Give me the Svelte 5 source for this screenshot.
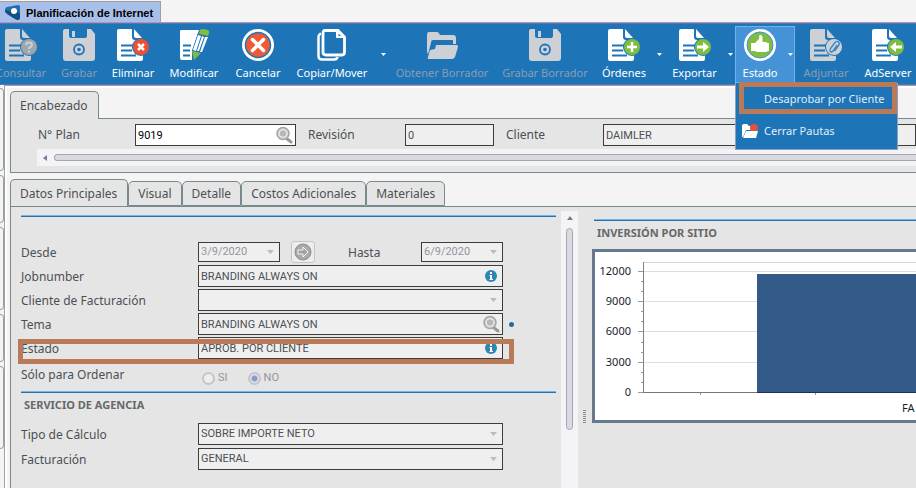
<script>
  let menuOpen = $state(true);
  let activeTab = $state('Datos Principales');
  let paraOrdenar = $state('NO');

  const tools = [
    { label: 'Consultar', icon: 'query', off: true },
    { label: 'Grabar', icon: 'save', off: true },
    { label: 'Eliminar', icon: 'delete' },
    { label: 'Modificar', icon: 'edit' },
    { label: 'Cancelar', icon: 'cancel' },
    { label: 'Copiar/Mover', icon: 'copy', drop: true },
    { label: 'Obtener Borrador', icon: 'folder', off: true },
    { label: 'Grabar Borrador', icon: 'save', off: true },
    { label: 'Órdenes', icon: 'add', drop: true },
    { label: 'Exportar', icon: 'export', drop: true },
    { label: 'Estado', icon: 'thumb', drop: true, menu: true },
    { label: 'Adjuntar', icon: 'attach', off: true },
    { label: 'AdServer', icon: 'import' }
  ];

  const tabs = ['Datos Principales', 'Visual', 'Detalle', 'Costos Adicionales', 'Materiales'];

  const docIcons = ['query', 'delete', 'add', 'export', 'attach', 'import'];

  // chart scale, y in pixels from the top of the plot
  const yAxis = [
    { value: 12000, y: 19 },
    { value: 9000, y: 49 },
    { value: 6000, y: 79 },
    { value: 3000, y: 110 },
    { value: 0, y: 140 }
  ];
  const minorTicks = [29, 39, 59, 69, 90, 100, 120, 130];
</script>

{#snippet toolIcon(name, off)}
  <svg class="tool-icon" width="32" height="32" viewBox="0 0 32 32" fill={off ? '#cdd0d4' : '#fff'} aria-hidden="true">
    {#if docIcons.includes(name)}
      <path d="M0 2Q0 0 2 0H15V8Q15 11 18 11H26V30Q26 32 24 32H2Q0 32 0 30Z" />
      <path d="M17 0L25 9H19Q17 9 17 7Z" />
      <path d="M4 16.500H16M4 21.500H15M4 26.500H19" stroke="#1d75b8" stroke-width="2" />
      <circle cx="24" cy="18" r="9" fill="#1d75b8" />
    {/if}
    {#if name === 'query'}
      <circle cx="24" cy="18" r="8" fill="#9fa6ae" />
      <path d="M21 16Q21 13.500 24 13.500T27 16Q27 17.500 24 19V20M24 21.500V23.500" fill="none" stroke="#cdd0d4" stroke-width="2" />
    {:else if name === 'delete'}
      <circle cx="24" cy="18" r="8" fill="#ee4f33" />
      <path d="M21 15L27 21M27 15L21 21" stroke="#fff" stroke-width="2.500" />
    {:else if name === 'add'}
      <circle cx="24" cy="18" r="8" fill="#7fbd41" />
      <path d="M24 13V23M19 18H29" stroke="#fff" stroke-width="2.500" />
    {:else if name === 'export'}
      <circle cx="24" cy="18" r="8" fill="#7fbd41" />
      <path d="M18 16.500H24V13L30 18L24 23V19.500H18Z" fill="#fff" />
    {:else if name === 'import'}
      <circle cx="24" cy="18" r="8" fill="#7fbd41" />
      <path d="M30 16.500H24V13L18 18L24 23V19.500H30Z" fill="#fff" />
    {:else if name === 'attach'}
      <circle cx="24" cy="18" r="8" fill="#cdd0d4" />
      <path d="M27 16L23 22Q21 24 20 22Q19.500 21 20.500 19.500L24.500 14Q26.500 11.500 28.500 13Q30 14.500 28.500 16.500L24.500 22" fill="none" stroke="#2f86c4" stroke-width="1.300" />
    {:else if name === 'save'}
      <path d="M2 0H6V7Q6 9 8 9H22Q24 9 24 7V0H28L32 5V29Q32 32 29 32H3Q0 32 0 29V2Q0 0 2 0Z" />
      <path d="M9 2H12V8H9Z" />
      <circle cx="16" cy="20.500" r="5" fill="none" stroke="#1d75b8" stroke-width="1.800" />
      <circle cx="16" cy="20.500" r="1.800" fill="#1d75b8" />
    {:else if name === 'edit'}
      <path d="M2 2Q2 1 4 1H21L14 22V31H4Q2 31 2 29Z" />
      <path d="M5 16.500H13M5 21.500H12M5 26.500H12" stroke="#1d75b8" stroke-width="2" />
      <path d="M20 4L31 7L25 25L16 32L14 22Z" fill="#1d75b8" />
      <path d="M22 1Q23 0 25 0L30 1Q32 2 31 4L30 7L21 5Z" fill="#7fbd41" />
      <path d="M20 6L23 7L18 22L15 21ZM24 7L26 8L21 22L19 22ZM27 8L30 8L24 23L22 23Z" fill="#fff" />
      <path d="M14 22L23 24L16 31Z" fill="#7fbd41" />
    {:else if name === 'cancel'}
      <circle cx="16" cy="16" r="16" />
      <circle cx="16" cy="16" r="12.500" fill="#ee5a36" stroke="#1d75b8" stroke-width="1.500" />
      <path d="M10.500 10.500L21.500 21.500M21.500 10.500L10.500 21.500" stroke="#fff" stroke-width="3.500" stroke-linecap="round" />
    {:else if name === 'copy'}
      <path d="M5 5H4Q2.500 6 2.500 8V27Q2.500 30.500 6 30.500H18Q21 30.500 21.500 28" fill="none" stroke="#fff" stroke-width="2.500" />
      <path d="M9 1.500H22L28.500 8V23Q28.500 26 26 26H10Q7 26 7 23V4Q7 1.500 9 1.500Z" fill="none" stroke="#fff" stroke-width="2.800" />
      <path d="M20 2V9H28L22 2Z" />
      <path d="M22.500 4.500V7H25Z" fill="#1d75b8" />
    {:else if name === 'folder'}
      <path d="M1 6Q1 3 3 3H11Q13 3 14 6H27Q30 6 30 9V15H27V11H7Q5 11 5 14L2 25Q1 25 1 22Z" />
      <path d="M10 16H31Q32 16 32 18L29 28Q28 30 26 30H3Q1 30 2 28L4 21L9 20Z" />
    {:else if name === 'thumb'}
      <circle cx="16" cy="16" r="16" />
      <circle cx="16" cy="16" r="13" fill="#7fbd41" stroke="#4593d6" stroke-width="1" />
      <path d="M7 14H11L15 10L15.500 6Q18 5.500 18.500 8V13H22Q24 13.500 24 16V21Q24 23 21 23H13L11 22H7ZM22 14H25V22H23Z" fill="#fff" />
    {/if}
  </svg>
{/snippet}

{#snippet chevron()}
  <svg class="chevron" width="7" height="4" viewBox="0 0 7 4" aria-hidden="true"><path d="M0 0H7L3.500 4Z" fill="#b9bcc2" /></svg>
{/snippet}

{#snippet lens()}
  <svg class="field-icon" width="18" height="18" viewBox="0 0 18 18" aria-hidden="true">
    <path d="M11 12L16 16" stroke="#999" stroke-width="3" stroke-linecap="round" />
    <circle cx="8" cy="7.500" r="6" fill="#d2d2d2" stroke="#a4a4a4" stroke-width="1.500" />
    <circle cx="8" cy="7.500" r="3.800" fill="#b7b7b7" stroke="#eee" />
  </svg>
{/snippet}

{#snippet info()}
  <svg class="field-icon" width="18" height="14" viewBox="0 0 18 14" aria-hidden="true">
    <circle cx="9" cy="7" r="6" fill="#2d86b3" />
    <path d="M7.500 6H10V10H11V11H7.500V10H8V7H7.500ZM8 3H10V5H8Z" fill="#fff" />
  </svg>
{/snippet}

<div class="app">
  <header class="titlebar">
    <div class="window-tab">
      <svg width="16" height="17" viewBox="0 0 16 17" aria-hidden="true">
        <path d="M0 6Q0 4 2 3L13 1Q15 1 15 3V14Q15 16 13 16Q10 16 0 8Z" fill="#1f6fae" />
        <path d="M0 6Q0 8 2 10L12 16Q14 16 15 14V9Z" fill="#124f87" />
        <circle cx="9" cy="7" r="3" fill="#fff" />
      </svg>
      <span>Planificación de Internet</span>
    </div>
  </header>

  <div class="toolbar">
    {#each tools as tool}
      <div class="tool" class:active={tool.menu && menuOpen}>
        <button class="tool-main" disabled={tool.off}>
          {@render toolIcon(tool.icon, tool.off)}
          <span>{tool.label}</span>
        </button>
        {#if tool.drop}
          <button class="tool-drop" aria-label="{tool.label}: más opciones" onclick={() => tool.menu && (menuOpen = !menuOpen)}>
            <svg width="5" height="3" viewBox="0 0 5 3"><path d="M0 0H5L2.500 3Z" fill="#fff" /></svg>
          </button>
        {/if}
        {#if tool.menu && menuOpen}
          <div class="menu">
            <button class="menu-item marked"><span>Desaprobar por Cliente</span></button>
            <button class="menu-item">
              <svg width="16" height="16" viewBox="0 0 16 16" aria-hidden="true">
                <path d="M0 3Q0 1 2 1H5L7 3H12V7H4L1 14H0Z" fill="#fff" />
                <circle cx="12" cy="5" r="4" fill="#e2513c" />
                <path d="M4 8H16L14 15H1Z" fill="#fff" />
              </svg>
              <span>Cerrar Pautas</span>
            </button>
          </div>
        {/if}
      </div>
    {/each}
  </div>

  <div class="workspace">
    <div class="dock">
      <i class="tall"></i><i></i><i class="tall"></i><i></i><i class="tall"></i>
    </div>

    <main class="main">
      <section class="header-panel">
        <div class="tabs single"><button class="tab current">Encabezado</button></div>
        <div class="header-body">
          <div class="header-row">
            <label for="plan">N° Plan</label>
            <div class="field editable"><input id="plan" value="9019" />{@render lens()}</div>
            <label for="revision">Revisión</label>
            <div class="field"><input id="revision" value="0" readonly /></div>
            <label for="cliente">Cliente</label>
            <div class="field"><input id="cliente" value="DAIMLER" readonly /></div>
          </div>
          <div class="hscroll">
            <svg width="4" height="6" viewBox="0 0 4 6" aria-hidden="true"><path d="M4 0V6L0 3Z" fill="#777b90" /></svg>
            <div class="hthumb"></div>
          </div>
        </div>
      </section>

      <section class="detail">
        <div class="tabs">
          {#each tabs as tab}
            <button class="tab" class:current={tab === activeTab} onclick={() => (activeTab = tab)}>{tab}</button>
          {/each}
        </div>
        <div class="detail-body">
          <form class="form">
            <hr />
            <div class="rows first">
              <div class="row dates">
                <label for="desde">Desde</label>
                <div class="field date"><select id="desde" disabled><option>3/9/2020</option></select>{@render chevron()}</div>
                <button type="button" class="go" aria-label="Copiar fecha" disabled>
                  <svg width="18" height="18" viewBox="0 0 18 18">
                    <circle cx="9" cy="9" r="8" fill="#a9a9a9" stroke="#8e8e8e" />
                    <path d="M4 7H9V4L14 9L9 14V11H4Z" fill="#a0a0a0" stroke="#f4f4f4" />
                  </svg>
                </button>
                <label for="hasta">Hasta</label>
                <div class="field date"><select id="hasta" disabled><option>6/9/2020</option></select>{@render chevron()}</div>
              </div>
              <div class="row">
                <label for="job">Jobnumber</label>
                <div class="field"><input id="job" value="BRANDING ALWAYS ON" readonly />{@render info()}</div>
              </div>
              <div class="row">
                <label for="facturar">Cliente de Facturación</label>
                <div class="field"><select id="facturar" disabled><option></option></select>{@render chevron()}</div>
              </div>
              <div class="row">
                <label for="tema">Tema</label>
                <div class="field"><input id="tema" value="BRANDING ALWAYS ON" readonly />{@render lens()}</div>
                <span class="required"></span>
              </div>
              <div class="row marked-row">
                <label for="estado">Estado</label>
                <div class="field"><input id="estado" value="APROB. POR CLIENTE" readonly />{@render info()}</div>
              </div>
            </div>
            <div class="row order-row" role="radiogroup" aria-labelledby="ordenar">
              <span id="ordenar">Sólo para Ordenar</span>
              <div class="radios">
                <label><input type="radio" bind:group={paraOrdenar} value="SI" disabled />SI</label>
                <label><input type="radio" bind:group={paraOrdenar} value="NO" disabled />NO</label>
              </div>
            </div>
            <hr />
            <h2>SERVICIO DE AGENCIA</h2>
            <div class="rows">
              <div class="row">
                <label for="calculo">Tipo de Cálculo</label>
                <div class="field"><select id="calculo"><option>SOBRE IMPORTE NETO</option></select>{@render chevron()}</div>
              </div>
              <div class="row">
                <label for="facturacion">Facturación</label>
                <div class="field"><select id="facturacion"><option>GENERAL</option></select>{@render chevron()}</div>
              </div>
            </div>
          </form>

          <div class="vscroll">
            <svg width="6" height="4" viewBox="0 0 6 4" aria-hidden="true"><path d="M0 4H6L3 0Z" fill="#777b90" /></svg>
            <div class="vthumb"></div>
          </div>
          <div class="splitter"></div>

          <div class="chart-side">
            <hr />
            <h2>INVERSIÓN POR SITIO</h2>
            <div class="chart">
              <svg width="100%" height="168" role="img" aria-label="Inversión por sitio">
                <path d="M48 10.500H2000" stroke="#d6d6d6" />
                {#each yAxis as tick}
                  <path d="M49 {tick.y}.5H2000" stroke="#dedede" />
                  <path d="M43 {tick.y}.5H48" stroke="#999" />
                  <text x="36" y={tick.y + 4} text-anchor="end">{tick.value}</text>
                {/each}
                {#each minorTicks as y}
                  <path d="M46 {y}.5H48" stroke="#999" />
                {/each}
                <rect x="162" y="22" width="100%" height="118" fill="#345a8a" />
                <path d="M48.500 10V140" stroke="#808080" />
                <path d="M48 140.500H162" stroke="#777" />
                <path d="M162 140.500H2000" stroke="#16324f" />
                <path d="M105.500 141V143M220.500 141V143" stroke="#999" />
                <text x="307" y="160">FA</text>
              </svg>
            </div>
          </div>
        </div>
      </section>
    </main>
  </div>
</div>

<style>
:global(body) {
  margin: 0;
  background: #f4f4f4;
  overflow: hidden;
}
.app {
  display: flex;
  flex-direction: column;
  min-height: 100vh;
  font-family: 'Noto Sans', sans-serif;
  font-size: 12px;
  line-height: 16px;
  color: #4c5054;
}
button, input, select {
  font: inherit;
  color: inherit;
  margin: 0;
  padding: 0;
  border: 0;
  background: none;
}
svg {
  display: block;
  flex: none;
}

/* title + toolbar */
.titlebar {
  display: flex;
  padding-top: 1px;
  border-bottom: 1px solid #a0a0a0;
}
.window-tab {
  display: flex;
  align-items: center;
  gap: 5px;
  height: 20px;
  padding: 0 7px 0 5px;
  background: #a8bfea;
  border: 1px solid #a0a0a0;
  border-width: 1px 1px 0 0;
  font-family: 'Liberation Sans', Arial, sans-serif;
  font-size: 11px;
  font-weight: bold;
  color: #000;
}
.window-tab span {
  padding-top: 2px;
}
.toolbar {
  display: grid;
  grid-template-columns: 58px 58px 50px 72px 56px 102px 108px 98px 70px 71px 60px 62px 62px;
  height: 58px;
  margin-left: -8px;
  padding: 2px 0 0;
  background: #1d75b8;
  border: 1px solid #5f6fc8;
  border-width: 1px 0;
  font-size: 11px;
}
.tool {
  position: relative;
  display: flex;
  height: 57px;
  box-sizing: border-box;
}
.tool-main {
  flex: 1;
  min-width: 0;
  display: flex;
  flex-direction: column;
  align-items: center;
  gap: 4px;
  padding-top: 3px;
  color: #fff;
  white-space: nowrap;
}
.tool-main:disabled {
  color: #8c9cb0;
}
.tool-drop {
  width: 10px;
  display: flex;
  align-items: center;
  justify-content: center;
}
.tool.active {
  background: #4593d6;
  box-shadow: inset 0 0 0 1px #6fb2f0;
}
.menu {
  position: absolute;
  top: 57px;
  left: 0;
  z-index: 5;
  width: 161px;
  height: 66px;
  background: #1d75b8;
  border: 1px solid #8d9fc0;
  border-top: 0;
}
.menu-item {
  display: flex;
  align-items: center;
  gap: 6px;
  box-sizing: border-box;
  width: 100%;
  height: 34px;
  padding-left: 6px;
  color: #e4edf6;
  white-space: nowrap;
}
.menu-item.marked {
  width: 158px;
  height: 32px;
  margin: -1px 0 0 3px;
  padding: 2px 0 0 20px;
  border: 5px solid #b97a57;
}

/* workspace */
.workspace {
  flex: 1;
  display: flex;
}
.dock {
  width: 4px;
  padding-top: 3px;
  display: flex;
  flex-direction: column;
  gap: 4px;
}
.dock i {
  height: 46px;
  border: 1px solid #a0a0a0;
  border-left: 0;
  border-radius: 0 4px 4px 0;
}
.dock i.tall {
  height: 81px;
}
.main {
  flex: 1;
  min-width: 0;
  display: flex;
  flex-direction: column;
  gap: 6px;
  padding: 5px 0 0 5px;
  border: 1px solid #a0a0a0;
  border-width: 1px 0 0 1px;
  box-shadow: inset 2px 2px 0 #fff;
}
.tabs {
  display: flex;
  align-items: flex-end;
  height: 27px;
}
.tab {
  height: 25px;
  padding: 0 9px;
  white-space: nowrap;
  background: #e5e5e5;
  border: 1px solid #778a90;
  border-radius: 5px 5px 0 0;
}
.tab.current {
  height: 28px;
  margin-bottom: -1px;
  padding: 0 10px 0 9px;
  border-bottom: 0;
}
.header-body {
  height: 53px;
  background: #e5e5e5;
  border: 1px solid #778a90;
  border-right: 0;
}
.header-row {
  display: grid;
  grid-template-columns: 97px 161px 109px 89px 109px 1fr;
  align-items: center;
  height: 22px;
  padding: 5px 0 3px 27px;
}
.header-row label:not(:first-child) {
  padding-left: 12px;
}
.hscroll {
  display: flex;
  align-items: center;
  gap: 7px;
  height: 17px;
  margin-left: 26px;
  padding-left: 6px;
  background: #f4f4f7;
}
.hthumb {
  flex: 1;
  height: 5px;
  border: 1px solid #a5a5b3;
  border-right: 0;
  border-radius: 4px 0 0 4px;
  background: #d9d9e0;
}

/* fields */
.field {
  display: flex;
  align-items: center;
  height: 22px;
  box-sizing: border-box;
  border: 1px solid #3c3c3c;
  background: #efefef;
  font-family: Roboto, sans-serif;
  font-size: 11px;
  min-width: 0;
}
.field.editable {
  background: #fff;
  color: #000;
}
.field input, .field select {
  flex: 1;
  min-width: 0;
  height: 20px;
  padding-left: 2px;
  appearance: none;
  outline: 0;
}
.field select:disabled {
  color: #9494a0;
  opacity: 1;
}
.field-icon {
  margin-right: 2px;
}
.chevron {
  margin-right: 5px;
}

.detail {
  flex: 1;
  display: flex;
  flex-direction: column;
}
.detail-body {
  flex: 1;
  display: flex;
  background: #e5e5e5;
  border: 1px solid #778a90;
  border-width: 1px 0 0 1px;
}
hr {
  width: 100%;
  height: 1px;
  margin: 0;
  border: 0;
  border-top: 1px solid #7db4dc;
  background: #1d75b8;
}
h2 {
  margin: 0;
  font-size: 11px;
  line-height: 16px;
  color: #66686a;
}
.form {
  width: 535px;
  padding: 8px 5px 0 10px;
}
.rows {
  display: grid;
  gap: 3px;
}
.rows.first {
  gap: 2px;
  padding-top: 24px;
}
.row {
  display: grid;
  grid-template-columns: 177px 305px 1fr;
  align-items: center;
}
.row > label {
  padding-top: 2px;
}
.row.dates {
  grid-template-columns: 177px 82px 11px 24px 33px 73px 82px;
  height: 22px;
}
.dates .field {
  height: 20px;
}
.dates .go {
  grid-column: 4;
  height: 22px;
  display: grid;
  place-items: center;
  border: 1px solid #c4c6ca;
  border-radius: 3px;
  background: #ededed;
}
.dates label:nth-of-type(2) {
  grid-column: 6;
}
.required {
  width: 5px;
  height: 5px;
  margin-left: 6px;
  border-radius: 50%;
  background: #1f6e9f;
}
.marked-row {
  position: relative;
}
.marked-row::after {
  content: '';
  position: absolute;
  top: 2px;
  left: -3px;
  width: 486px;
  height: 15px;
  border: 5px solid #b97a57;
}
.order-row {
  height: 32px;
}
.radios {
  display: flex;
  gap: 20px;
  padding: 6px 0 0 4px;
  font-family: Roboto, sans-serif;
  font-size: 11px;
  color: #9494a0;
}
.radios label {
  display: flex;
  align-items: center;
  gap: 3px;
}
.radios input {
  appearance: none;
  box-sizing: border-box;
  width: 13px;
  height: 13px;
  border: 2px solid #c4c5ca;
  border-radius: 50%;
  background: #eee;
}
.radios input:checked {
  background: radial-gradient(#8a9cc9 35%, #e2e5ef 60%);
}
.form h2 {
  padding: 4px 0 10px 3px;
}
.vscroll {
  display: flex;
  flex-direction: column;
  align-items: center;
  gap: 8px;
  width: 17px;
  margin-top: 4px;
  padding-top: 5px;
  box-sizing: border-box;
  background: #f4f4f7;
}
.vthumb {
  width: 5px;
  height: 200px;
  border: 1px solid #a5a5b3;
  border-radius: 4px;
  background: #d9d9e0;
}
.splitter {
  align-self: flex-start;
  width: 3px;
  height: 13px;
  margin: 203px 6px 0 5px;
  background: repeating-linear-gradient(#8a8a95 0 1px, #e5e5e5 1px 2px);
}
.chart-side {
  flex: 1;
  min-width: 0;
  padding-top: 12px;
}
.chart-side hr {
  margin-left: 2px;
  width: auto;
}
.chart-side h2 {
  padding: 4px 0 8px 5px;
}
.chart {
  border: 3px solid #68788f;
  border-right: 0;
  background: #fff;
  overflow: hidden;
}
.chart text {
  font-size: 11px;
  fill: #1a1a2e;
}
</style>
